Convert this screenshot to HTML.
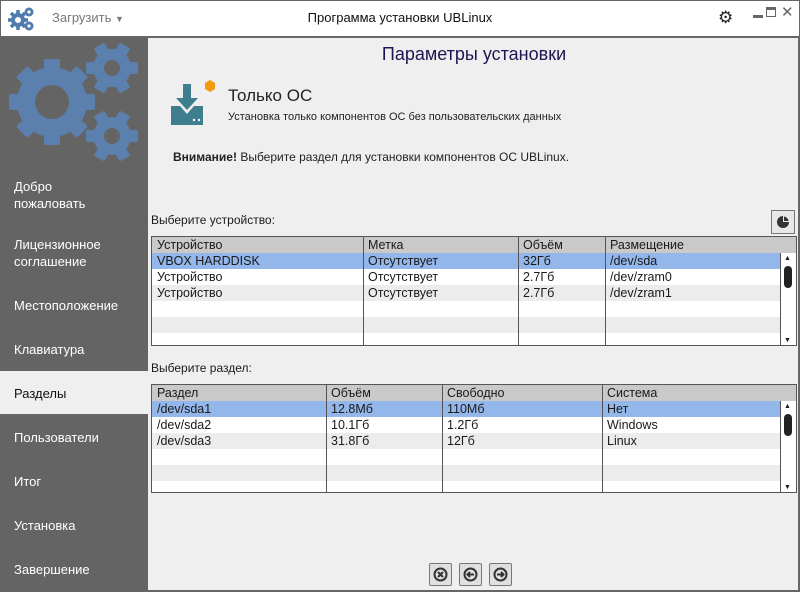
<!DOCTYPE html>
<html><head><meta charset="utf-8"><style>
*{margin:0;padding:0;box-sizing:border-box}
body{width:800px;height:592px;overflow:hidden;font-family:"Liberation Sans","DejaVu Sans",sans-serif;font-size:12px;color:#1a1a1a;background:#efefef;position:relative}
.a{position:absolute}
#top{left:0;top:0;width:800px;height:38px;background:#fff;border:1px solid #666;border-bottom:2px solid #666}
#side{left:0;top:38px;width:148px;height:554px;background:#646464}
.nav{position:absolute;left:14px;color:#fff;font-size:13px;line-height:17px}
#sel{left:0;top:371px;width:148px;height:43px;background:#efefef}
.tbl{position:absolute;border:1px solid #555;background:#fff;overflow:hidden}
.row{position:absolute;left:0;height:16px;width:100%;font-size:12.5px;line-height:16px}
.row span{position:absolute;top:0;padding-left:5px}
.vl{position:absolute;top:0;bottom:0;width:1px;background:#555}
.sb{position:absolute;right:0;width:16px;background:#fff;border-left:1px solid #555}
.btn{position:absolute;top:563px;width:23px;height:23px;border:1px solid #777;background:#e0e0e0;border-radius:2px}
</style></head><body>
<div id="top" class="a"></div>
<svg class="a" style="left:8px;top:5px" width="28" height="28" viewBox="0 0 28 28">
<g fill="#4f7bad"><circle cx="10" cy="15" r="7"/><g stroke="#4f7bad" stroke-width="3.5"><line x1="10" y1="5" x2="10" y2="25"/><line x1="0" y1="15" x2="20" y2="15"/><line x1="3" y1="8" x2="17" y2="22"/><line x1="17" y1="8" x2="3" y2="22"/></g><circle cx="21" cy="7" r="4.5"/><circle cx="21" cy="21" r="4.5"/></g>
<circle cx="10" cy="15" r="3" fill="#fff"/><circle cx="21" cy="7" r="1.6" fill="#fff"/><circle cx="21" cy="21" r="1.6" fill="#fff"/></svg>
<div class="a" style="left:52px;top:10px;color:#777;font-size:13px">Загрузить <span style="font-size:9px">▼</span></div>
<div class="a" style="left:0;width:800px;top:10px;text-align:center;font-size:13px;color:#111">Программа установки UBLinux</div>
<div class="a" style="left:718px;top:9px;font-size:17px;color:#222;line-height:17px">⚙</div>
<div class="a" style="left:753px;top:15px;width:10px;height:3px;background:#666"></div>
<div class="a" style="left:766px;top:7px;width:10px;height:10px;border:1px solid #666;border-top:3px solid #666"></div>
<div class="a" style="left:781px;top:3px;font-size:15px;color:#666">✕</div>
<div id="side" class="a"></div>
<svg class="a" style="left:0;top:38px" width="148" height="130" viewBox="0 0 148 130">
<g fill="#5b80ae">
<g transform="translate(52,64)"><circle r="35"/><rect x="-8" y="-43" width="16" height="86" rx="2"/><rect x="-8" y="-43" width="16" height="86" rx="2" transform="rotate(45)"/><rect x="-8" y="-43" width="16" height="86" rx="2" transform="rotate(90)"/><rect x="-8" y="-43" width="16" height="86" rx="2" transform="rotate(135)"/></g>
<g transform="translate(112,30)"><circle r="19"/><rect x="-6" y="-26" width="12" height="52" rx="1.5" transform="rotate(30)"/><rect x="-6" y="-26" width="12" height="52" rx="1.5" transform="rotate(90)"/><rect x="-6" y="-26" width="12" height="52" rx="1.5" transform="rotate(150)"/></g>
<g transform="translate(112,98)"><circle r="19"/><rect x="-6" y="-26" width="12" height="52" rx="1.5" transform="rotate(30)"/><rect x="-6" y="-26" width="12" height="52" rx="1.5" transform="rotate(90)"/><rect x="-6" y="-26" width="12" height="52" rx="1.5" transform="rotate(150)"/></g>
</g>
<circle cx="52" cy="64" r="17" fill="#646464"/><circle cx="112" cy="30" r="8" fill="#646464"/><circle cx="112" cy="98" r="8" fill="#646464"/></svg>
<div id="sel" class="a"></div>
<div class="nav" style="top:178px">Добро<br>пожаловать</div>
<div class="nav" style="top:236px">Лицензионное<br>соглашение</div>
<div class="nav" style="top:297px">Местоположение</div>
<div class="nav" style="top:341px">Клавиатура</div>
<div class="nav" style="top:385px;color:#111">Разделы</div>
<div class="nav" style="top:429px">Пользователи</div>
<div class="nav" style="top:473px">Итог</div>
<div class="nav" style="top:517px">Установка</div>
<div class="nav" style="top:561px">Завершение</div>
<div class="a" style="left:148px;width:652px;top:44px;text-align:center;font-size:18px;color:#1c1550">Параметры установки</div>
<svg class="a" style="left:170px;top:80px" width="50" height="48" viewBox="0 0 50 48">
<polygon points="40,0 45,3 45,9 40,12 35,9 35,3" fill="#f39a10"/>
<path d="M13 4h8v14h7l-11 12L6 18h7z" fill="#3f7e8e"/>
<path d="M1 26h9l7 8 7-8h9v19H1z" fill="#3f7e8e"/><circle cx="24" cy="40" r="1.2" fill="#fff"/><circle cx="29" cy="40" r="1.2" fill="#fff"/></svg>
<div class="a" style="left:228px;top:86px;font-size:17px;color:#222">Только ОС</div>
<div class="a" style="left:228px;top:111px;font-size:11px;color:#222">Установка только компонентов ОС без пользовательских данных</div>
<div class="a" style="left:173px;top:150px;font-size:12px;color:#222"><b>Внимание!</b> Выберите раздел для установки компонентов ОС UBLinux.</div>
<div class="a" style="left:151px;top:213px;font-size:12px">Выберите устройство:</div>
<div class="a" style="left:771px;top:210px;width:24px;height:24px;border:1px solid #777;background:#e8e8e8"><svg width="22" height="22"><circle cx="11" cy="11" r="6" fill="#333"/><path d="M11 11V4.5A6.5 6.5 0 0 1 17.5 11z" fill="#e8e8e8"/><path d="M12 10V5.5A5.5 5.5 0 0 1 16.5 10z" fill="#333"/></svg></div>
<div class="tbl" style="left:151px;top:236px;width:646px;height:110px">
<div class="row" style="top:0;background:#c9c9c9"><span style="left:0">Устройство</span><span style="left:211px">Метка</span><span style="left:366px">Объём</span><span style="left:453px">Размещение</span></div>
<div class="row" style="top:16px;background:#93b7ea"><span style="left:0">VBOX HARDDISK</span><span style="left:211px">Отсутствует</span><span style="left:366px">32Гб</span><span style="left:453px">/dev/sda</span></div>
<div class="row" style="top:32px"><span style="left:0">Устройство</span><span style="left:211px">Отсутствует</span><span style="left:366px">2.7Гб</span><span style="left:453px">/dev/zram0</span></div>
<div class="row" style="top:48px;background:#ececec"><span style="left:0">Устройство</span><span style="left:211px">Отсутствует</span><span style="left:366px">2.7Гб</span><span style="left:453px">/dev/zram1</span></div>
<div class="row" style="top:80px;background:#ececec"></div>
<div class="vl" style="left:211px"></div><div class="vl" style="left:366px"></div><div class="vl" style="left:453px"></div>
<div class="sb" style="top:16px;bottom:0"><div style="position:absolute;left:3px;top:13px;width:8px;height:22px;border-radius:4px;background:#222"></div><div style="position:absolute;left:3px;top:2px;font-size:7px">▲</div><div style="position:absolute;left:3px;bottom:1px;font-size:7px">▼</div></div>
</div>
<div class="a" style="left:151px;top:361px;font-size:12px">Выберите раздел:</div>
<div class="tbl" style="left:151px;top:384px;width:646px;height:109px">
<div class="row" style="top:0;background:#c9c9c9"><span style="left:0">Раздел</span><span style="left:174px">Объём</span><span style="left:290px">Свободно</span><span style="left:450px">Система</span></div>
<div class="row" style="top:16px;background:#93b7ea"><span style="left:0">/dev/sda1</span><span style="left:174px">12.8Мб</span><span style="left:290px">110Мб</span><span style="left:450px">Нет</span></div>
<div class="row" style="top:32px"><span style="left:0">/dev/sda2</span><span style="left:174px">10.1Гб</span><span style="left:290px">1.2Гб</span><span style="left:450px">Windows</span></div>
<div class="row" style="top:48px;background:#ececec"><span style="left:0">/dev/sda3</span><span style="left:174px">31.8Гб</span><span style="left:290px">12Гб</span><span style="left:450px">Linux</span></div>
<div class="row" style="top:80px;background:#ececec"></div>
<div class="vl" style="left:174px"></div><div class="vl" style="left:290px"></div><div class="vl" style="left:450px"></div>
<div class="sb" style="top:16px;bottom:0"><div style="position:absolute;left:3px;top:13px;width:8px;height:22px;border-radius:4px;background:#222"></div><div style="position:absolute;left:3px;top:2px;font-size:7px">▲</div><div style="position:absolute;left:3px;bottom:1px;font-size:7px">▼</div></div>
</div>
<div class="btn" style="left:429px"><svg width="21" height="21"><circle cx="10.5" cy="10.5" r="6" fill="none" stroke="#333" stroke-width="2"/><path d="M8 8l5 5M13 8l-5 5" stroke="#333" stroke-width="2"/></svg></div>
<div class="btn" style="left:459px"><svg width="21" height="21"><circle cx="10.5" cy="10.5" r="6" fill="none" stroke="#333" stroke-width="2"/><path d="M14 10.5H7.5M10 8l-2.5 2.5L10 13" stroke="#333" stroke-width="2" fill="none"/></svg></div>
<div class="btn" style="left:489px"><svg width="21" height="21"><circle cx="10.5" cy="10.5" r="6" fill="none" stroke="#333" stroke-width="2"/><path d="M7 10.5h6.5M11 8l2.5 2.5L11 13" stroke="#333" stroke-width="2" fill="none"/></svg></div>
<div class="a" style="left:798px;top:38px;width:2px;height:554px;background:#666"></div>
<div class="a" style="left:0;top:590px;width:800px;height:2px;background:#666"></div>
</body></html>
